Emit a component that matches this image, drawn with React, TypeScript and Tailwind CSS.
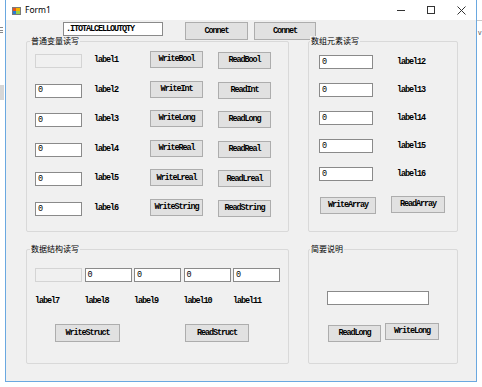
import React from "react";

const mono = "font-['Liberation_Mono',monospace] text-[8.5px] font-bold tracking-[-1.1px] text-black";
const monoReg = "font-['Liberation_Mono',monospace] text-[8.5px] tracking-[-1.1px] text-black";
const cjk = "font-['Noto_Sans_CJK_SC',sans-serif] text-[8px] leading-[10px] text-black";

function Btn({ label, className = "" }: { label: string; className?: string }) {
  return (
    <div
      className={`flex items-center justify-center border border-[#adadad] bg-[#e1e1e1] ${mono} ${className}`}
    >
      {label}
    </div>
  );
}

function TB({ value = "", disabled = false, bold = false, className = "" }: { value?: string; disabled?: boolean; bold?: boolean; className?: string }) {
  return (
    <div
      className={`flex items-center pl-[2px] border ${
        disabled ? "border-[#d4d4d4] bg-[#f0f0f0]" : "border-[#8a8a8a] bg-white"
      } ${bold ? mono : monoReg} ${className}`}
    >
      {value}
    </div>
  );
}

function Group({ title, titleClass, className = "", children }: { title: string; titleClass: string; className?: string; children: React.ReactNode }) {
  return (
    <div className={`relative border border-[#d9d9d9] rounded-[2px] ${className}`}>
      <span className={`absolute -top-[6px] px-[1px] bg-[#f0f0f0] ${cjk} ${titleClass}`}>{title}</span>
      {children}
    </div>
  );
}

const rows1 = [
  { tb: null, l: "label1", w: "WriteBool", r: "ReadBool" },
  { tb: "0", l: "label2", w: "WriteInt", r: "ReadInt" },
  { tb: "0", l: "label3", w: "WriteLong", r: "ReadLong" },
  { tb: "0", l: "label4", w: "WriteReal", r: "ReadReal" },
  { tb: "0", l: "label5", w: "WriteLreal", r: "ReadLreal" },
  { tb: "0", l: "label6", w: "WriteString", r: "ReadString" },
];

export default function App() {
  return (
    <div className="w-[482px] h-[387px] bg-white overflow-hidden flex">
      {/* left strip outside window */}
      <div className="w-[5px] flex flex-col">
        <div className="mt-[27px] h-[6px] w-[3px] flex flex-col justify-between">
          <div className="h-px bg-[#888]" />
          <div className="h-px bg-[#888]" />
          <div className="h-px bg-[#888]" />
        </div>
        <div className="mt-[52px] h-[15px] w-[4px] bg-[#d6d6d6]" />
      </div>

      {/* window */}
      <div className="w-[472px] h-[382px] border-x border-b border-[#6aa8e0] flex flex-col">
        {/* title bar */}
        <div className="h-[20px] bg-white flex items-center">
          <svg className="ml-[6px]" width="9" height="9" viewBox="0 0 9 9">
            <rect x="0.5" y="1.5" width="8" height="7" fill="#fff" stroke="#7a7a7a" strokeWidth="1" />
            <rect x="1" y="2" width="3" height="3" fill="#e8541c" />
            <rect x="4" y="2" width="4" height="3" fill="#f4b400" />
            <rect x="1" y="5" width="3" height="3" fill="#2b7bd4" />
            <rect x="4" y="5" width="4" height="3" fill="#9ad04a" />
          </svg>
          <span className="ml-[4px] font-['Noto_Sans',sans-serif] text-[8.5px] text-black leading-none">Form1</span>
          <div className="ml-auto flex h-full">
            <div className="w-[30px] flex items-center justify-center">
              <div className="w-[8px] h-px bg-[#333]" />
            </div>
            <div className="w-[30px] flex items-center justify-center">
              <div className="w-[8px] h-[8px] border border-[#333]" />
            </div>
            <div className="w-[30px] flex items-center justify-center">
              <svg width="9" height="9" viewBox="0 0 9 9">
                <path d="M0.5 0.5 L8.5 8.5 M8.5 0.5 L0.5 8.5" stroke="#333" strokeWidth="1" />
              </svg>
            </div>
          </div>
        </div>

        {/* body */}
        <div className="flex-1 bg-[#f0f0f0] flex flex-col">
          <div className="mt-[2px] flex items-start">
            <TB value=".ITOTALCELLOUTQTY" bold className="ml-[57px] w-[100px] h-[14px]" />
            <Btn label="Connet" className="ml-[22px] w-[63px] h-[18px] border-[#0078d7]" />
            <Btn label="Connet" className="ml-[6px] w-[62px] h-[18px]" />
          </div>

          <div className="mt-[1px] ml-[20px] grid grid-cols-[263px_150px] grid-rows-[191px_115px] gap-x-[19px] gap-y-[17px]">
            {/* group 1 */}
            <Group title="普通变量读写" titleClass="left-[3px]">
              <div className="pt-[9px] pl-[8px] flex flex-col gap-[12.6px]">
                {rows1.map((r) => (
                  <div key={r.l} className="flex items-start h-[17px]">
                    {r.tb === null ? (
                      <TB disabled className="mt-[3px] w-[47px] h-[14px]" />
                    ) : (
                      <TB value={r.tb} className="mt-[3px] w-[47px] h-[14px]" />
                    )}
                    <span className={`ml-[12px] w-[45px] mt-[1px] leading-[17px] ${mono}`}>{r.l}</span>
                    <Btn label={r.w} className="ml-[11px] w-[53px] h-[17px]" />
                    <Btn label={r.r} className="ml-[15px] mt-[1px] w-[53px] h-[17px]" />
                  </div>
                ))}
              </div>
            </Group>

            {/* group 2 */}
            <Group title="数组元素读写" titleClass="left-[1px]">
              <div className="pt-[13px] pl-[10px] flex flex-col">
                <div className="flex flex-col gap-[14px]">
                  {["label12", "label13", "label14", "label15", "label16"].map((l) => (
                    <div key={l} className="flex items-center h-[14px]">
                      <TB value="0" className="w-[54px] h-[14px]" />
                      <span className={`ml-[24px] -mt-[1px] leading-[14px] ${mono}`}>{l}</span>
                    </div>
                  ))}
                </div>
                <div className="mt-[16px] flex items-start">
                  <Btn label="WriteArray" className="ml-[1px] w-[56px] h-[17px]" />
                  <Btn label="ReadArray" className="ml-[15px] -mt-[1px] w-[54px] h-[17px]" />
                </div>
              </div>
            </Group>

            {/* group 3 */}
            <Group title="数据结构读写" titleClass="left-[3px]">
              <div className="pt-[18px] pl-[8px] flex flex-col">
                <div className="grid grid-cols-[47px_47px_47px_47px_47px] gap-x-[2.5px]">
                  <TB disabled className="h-[14px]" />
                  <TB value="0" className="h-[14px]" />
                  <TB value="0" className="h-[14px]" />
                  <TB value="0" className="h-[14px]" />
                  <TB value="0" className="h-[14px]" />
                </div>
                <div className="mt-[14px] grid grid-cols-[47px_47px_47px_47px_47px] gap-x-[2.5px]">
                  {["label7", "label8", "label9", "label10", "label11"].map((l) => (
                    <span key={l} className={`leading-[10px] ${mono}`}>{l}</span>
                  ))}
                </div>
                <div className="mt-[18px] flex">
                  <Btn label="WriteStruct" className="ml-[20px] w-[65px] h-[18px]" />
                  <Btn label="ReadStruct" className="ml-[65px] w-[64px] h-[18px]" />
                </div>
              </div>
            </Group>

            {/* group 4 */}
            <Group title="简要说明" titleClass="left-[1px]">
              <div className="pt-[41px] pl-[18px] flex flex-col">
                <TB className="w-[102px] h-[14px]" />
                <div className="mt-[20px] flex items-start">
                  <Btn label="ReadLong" className="ml-[1px] w-[53px] h-[17px]" />
                  <Btn label="WriteLong" className="ml-[4px] -mt-[2px] w-[54px] h-[17px]" />
                </div>
              </div>
            </Group>
          </div>
        </div>
      </div>

      {/* right strip outside window */}
      <div className="flex-1 flex flex-col">
        <div className="mt-[20px] h-px bg-[#c8c8c8]" />
        <span className="mt-[8px] ml-[1px] font-['Liberation_Sans',sans-serif] text-[7px] text-[#555] leading-none">v</span>
      </div>
    </div>
  );
}
